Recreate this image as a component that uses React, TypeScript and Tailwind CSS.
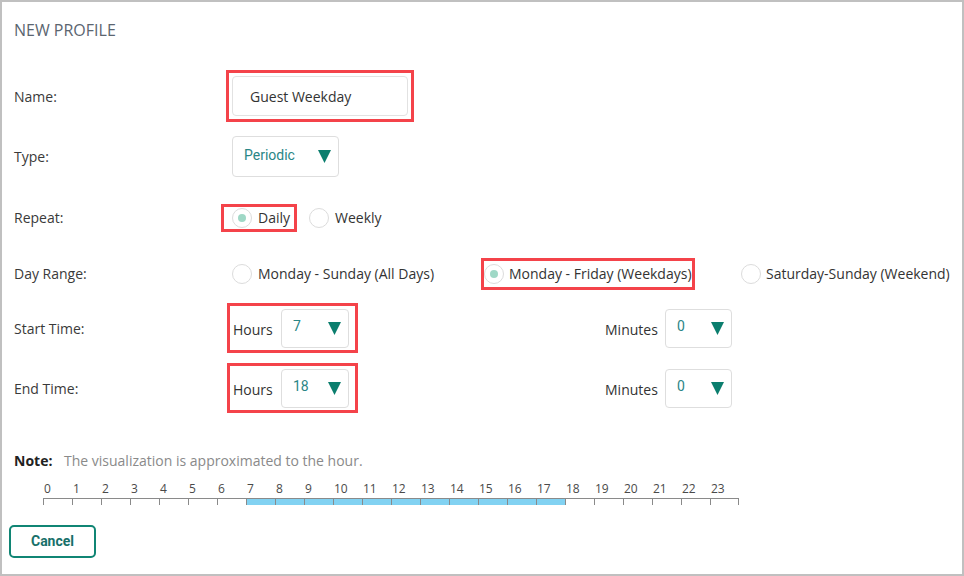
import React from "react";

const HOURS = Array.from({ length: 24 }, (_, i) => i);

function Caret() {
    return (
        <svg width="13" height="13" viewBox="0 0 13 13" className="shrink-0">
            <polygon points="0,0 13,0 6.5,13" fill="#0b7e6e" />
        </svg>
    );
}

function Select({ value, width }: { value: string; width: string }) {
    return (
        <div className={`${width} flex items-center justify-between rounded-[4px] border border-[#dedede] bg-white pl-[11px] pr-[7px] h-full`}>
            <span className="font-['Roboto',sans-serif] text-[14px] text-[#2a8686] -mt-[3px]">{value}</span>
            <Caret />
        </div>
    );
}

function Radio({ checked }: { checked?: boolean }) {
    return (
        <span className="w-[20px] h-[20px] rounded-full border border-[#dcdcdc] bg-white flex items-center justify-center shrink-0">
            {checked && <span className="w-[8px] h-[8px] rounded-full bg-[#9fd8c6]" />}
        </span>
    );
}

function Label({ children }: { children: React.ReactNode }) {
    return <div className="w-[212px] shrink-0 text-[14px] text-[#3a3a3a]">{children}</div>;
}

export default function App() {
    const start = 7;
    const end = 18;

    return (
        <div className="w-[964px] h-[576px] border-2 border-[#c0c0c0] bg-white pl-[12px] pt-[18px] font-['Open_Sans',sans-serif]">
            <div className="h-[20px] leading-[20px] text-[16px] text-[#5b6570]">NEW PROFILE</div>

            {/* Name */}
            <div className="mt-[30px] h-[52px] flex items-center">
                <Label>Name:</Label>
                <div className="border-[3px] border-[#f4434a] p-[3px]">
                    <div className="w-[176px] h-[40px] rounded-[4px] border border-[#e2e2e2] pl-[17px] flex items-center text-[14px] text-[#333]">
                        Guest Weekday
                    </div>
                </div>
            </div>

            {/* Type */}
            <div className="mt-[14px] h-[41px] flex items-center">
                <Label>Type:</Label>
                <div className="ml-[6px] h-[41px]">
                    <Select value="Periodic" width="w-[107px]" />
                </div>
            </div>

            {/* Repeat */}
            <div className="mt-[27px] h-[27px] flex items-center">
                <Label>Repeat:</Label>
                <div className="-ml-[5px] h-[28px] border-[3px] border-[#f4434a] pl-[8px] pr-[4px] flex items-center gap-[6px] text-[14px] text-[#333]">
                    <Radio checked />
                    <span>Daily</span>
                </div>
                <div className="ml-[12px] flex items-center gap-[6px] text-[14px] text-[#333]">
                    <Radio />
                    <span>Weekly</span>
                </div>
            </div>

            {/* Day Range */}
            <div className="mt-[27px] h-[31px] flex items-center">
                <Label>Day Range:</Label>
                <div className="ml-[6px] w-[249px] flex items-center gap-[6px] text-[14px] text-[#333]">
                    <Radio />
                    <span>Monday - Sunday (All Days)</span>
                </div>
                <div className="w-[214px] h-[32px] border-[3px] border-[#f4434a] flex items-center gap-[5px] text-[14px] text-[#333]">
                    <Radio checked />
                    <span>Monday - Friday (Weekdays)</span>
                </div>
                <div className="ml-[46px] flex items-center gap-[5px] text-[14px] text-[#333]">
                    <Radio />
                    <span>Saturday-Sunday (Weekend)</span>
                </div>
            </div>

            {/* Start / End time */}
            {[
                { label: "Start Time:", hours: String(start), mt: "mt-[14px]" },
                { label: "End Time:", hours: String(end), mt: "mt-[10px]" },
            ].map((row) => (
                <div key={row.label} className={`${row.mt} h-[50px] flex items-center`}>
                    <Label>{row.label}</Label>
                    <div className="ml-[1px] w-[131px] h-[50px] border-[3px] border-[#f4434a] pl-[3px] flex items-center">
                        <span className="w-[48px] text-[14px] text-[#333] pt-[2px]">Hours</span>
                        <div className="h-[39px]">
                            <Select value={row.hours} width="w-[68px]" />
                        </div>
                    </div>
                    <span className="ml-[247px] w-[60px] text-[14px] text-[#333] pt-[2px]">Minutes</span>
                    <div className="h-[39px]">
                        <Select value="0" width="w-[67px]" />
                    </div>
                </div>
            ))}

            {/* Note */}
            <div className="mt-[37px] h-[20px] flex items-center text-[14px]">
                <span className="w-[50px] font-bold text-[#222]">Note:</span>
                <span className="text-[#8a8a8a]">The visualization is approximated to the hour.</span>
            </div>

            {/* Hour scale */}
            <div className="mt-[11px] ml-[29px] flex">
                {HOURS.map((h) => (
                    <div key={h} className="w-[29px] flex flex-col">
                        <span className="h-[17px] leading-[16px] pl-[1px] text-[12px] text-[#4a4a4a]">{h}</span>
                        <div
                            className={`h-[7px] border-t border-l border-[#8a8a8a] ${h === 23 ? "border-r" : ""} ${
                                h >= start && h < end ? "bg-[#82d2f2]" : ""
                            }`}
                        />
                    </div>
                ))}
            </div>

            <button className="mt-[20px] -ml-[5px] w-[87px] h-[33px] rounded-[5px] border-2 border-[#108574] font-['Roboto',sans-serif] font-bold text-[14px] text-[#17706a]">
                Cancel
            </button>
        </div>
    );
}
